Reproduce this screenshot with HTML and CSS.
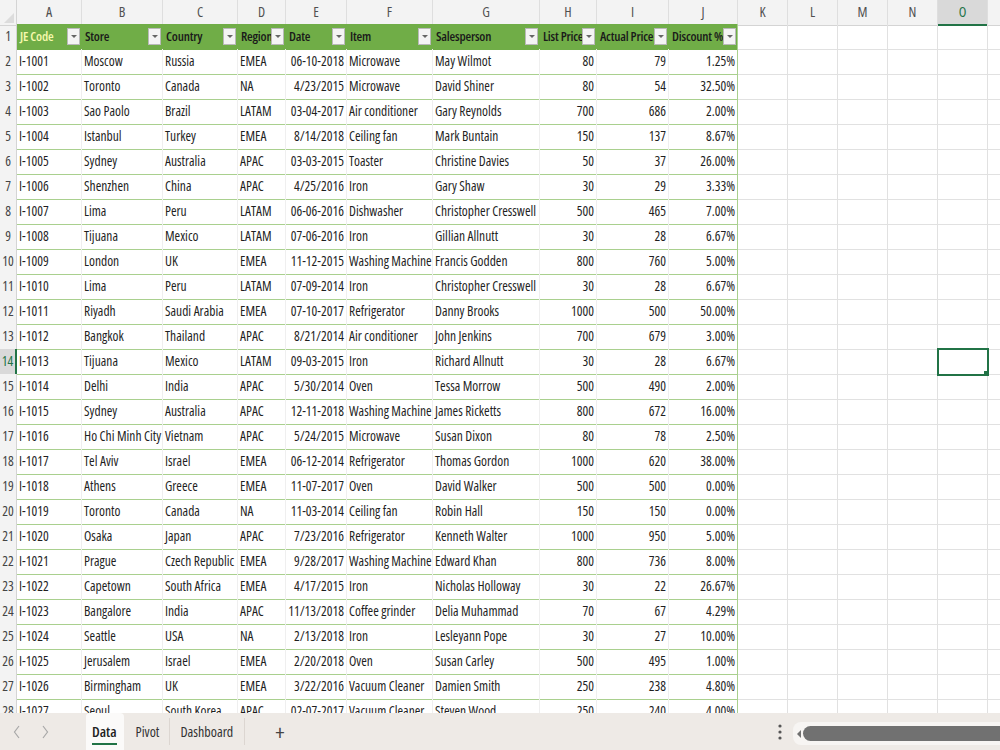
FILE: index.html
```html
<!DOCTYPE html>
<html lang="en">
<head>
    <meta charset="UTF-8">
    <meta name="viewport" content="width=device-width, initial-scale=1.0">
    <title>Sales Data</title>
    <link rel="stylesheet" href="styles.css">
</head>
<body>

    <div class="sheet" id="sheet">
        <div class="row col-heads" id="col-heads">
            <div class="corner"></div>
        </div>
    </div>

    <div class="tabbar">
        <div class="tab-nav">
            <svg class="nav-arrow" width="8" height="14" viewBox="0 0 8 14"><polyline points="6,1 1.5,7 6,13" fill="none" stroke="#a8a8a8" stroke-width="1.2"/></svg>
            <svg class="nav-arrow" width="8" height="14" viewBox="0 0 8 14"><polyline points="2,1 6.5,7 2,13" fill="none" stroke="#a8a8a8" stroke-width="1.2"/></svg>
        </div>
        <div class="tab active">Data</div>
        <div class="tab pivot">Pivot</div>
        <div class="tab dash">Dashboard</div>
        <div class="tab-add">+</div>
        <div class="spacer"></div>
        <svg class="more" width="4" height="16" viewBox="0 0 4 16">
            <circle cx="2" cy="2" r="1.6" fill="#555"/>
            <circle cx="2" cy="8" r="1.6" fill="#555"/>
            <circle cx="2" cy="14" r="1.6" fill="#555"/>
        </svg>
        <div class="hscroll">
            <span class="hscroll-arrow"></span>
            <span class="hscroll-thumb"></span>
        </div>
    </div>

    <script>
        const letters = ['A','B','C','D','E','F','G','H','I','J','K','L','M','N','O','P'];
        const headers = ['JE Code','Store','Country','Region','Date','Item','Salesperson','List Price','Actual Price','Discount %'];
        // columns that hold numbers are right aligned
        const numeric = [4, 7, 8, 9];

        const rows = [
            ['I-1001','Moscow','Russia','EMEA','06-10-2018','Microwave','May Wilmot','80','79','1.25%'],
            ['I-1002','Toronto','Canada','NA','4/23/2015','Microwave','David Shiner','80','54','32.50%'],
            ['I-1003','Sao Paolo','Brazil','LATAM','03-04-2017','Air conditioner','Gary Reynolds','700','686','2.00%'],
            ['I-1004','Istanbul','Turkey','EMEA','8/14/2018','Ceiling fan','Mark Buntain','150','137','8.67%'],
            ['I-1005','Sydney','Australia','APAC','03-03-2015','Toaster','Christine Davies','50','37','26.00%'],
            ['I-1006','Shenzhen','China','APAC','4/25/2016','Iron','Gary Shaw','30','29','3.33%'],
            ['I-1007','Lima','Peru','LATAM','06-06-2016','Dishwasher','Christopher Cresswell','500','465','7.00%'],
            ['I-1008','Tijuana','Mexico','LATAM','07-06-2016','Iron','Gillian Allnutt','30','28','6.67%'],
            ['I-1009','London','UK','EMEA','11-12-2015','Washing Machine','Francis Godden','800','760','5.00%'],
            ['I-1010','Lima','Peru','LATAM','07-09-2014','Iron','Christopher Cresswell','30','28','6.67%'],
            ['I-1011','Riyadh','Saudi Arabia','EMEA','07-10-2017','Refrigerator','Danny Brooks','1000','500','50.00%'],
            ['I-1012','Bangkok','Thailand','APAC','8/21/2014','Air conditioner','John Jenkins','700','679','3.00%'],
            ['I-1013','Tijuana','Mexico','LATAM','09-03-2015','Iron','Richard Allnutt','30','28','6.67%'],
            ['I-1014','Delhi','India','APAC','5/30/2014','Oven','Tessa Morrow','500','490','2.00%'],
            ['I-1015','Sydney','Australia','APAC','12-11-2018','Washing Machine','James Ricketts','800','672','16.00%'],
            ['I-1016','Ho Chi Minh City','Vietnam','APAC','5/24/2015','Microwave','Susan Dixon','80','78','2.50%'],
            ['I-1017','Tel Aviv','Israel','EMEA','06-12-2014','Refrigerator','Thomas Gordon','1000','620','38.00%'],
            ['I-1018','Athens','Greece','EMEA','11-07-2017','Oven','David Walker','500','500','0.00%'],
            ['I-1019','Toronto','Canada','NA','11-03-2014','Ceiling fan','Robin Hall','150','150','0.00%'],
            ['I-1020','Osaka','Japan','APAC','7/23/2016','Refrigerator','Kenneth Walter','1000','950','5.00%'],
            ['I-1021','Prague','Czech Republic','EMEA','9/28/2017','Washing Machine','Edward Khan','800','736','8.00%'],
            ['I-1022','Capetown','South Africa','EMEA','4/17/2015','Iron','Nicholas Holloway','30','22','26.67%'],
            ['I-1023','Bangalore','India','APAC','11/13/2018','Coffee grinder','Delia Muhammad','70','67','4.29%'],
            ['I-1024','Seattle','USA','NA','2/13/2018','Iron','Lesleyann Pope','30','27','10.00%'],
            ['I-1025','Jerusalem','Israel','EMEA','2/20/2018','Oven','Susan Carley','500','495','1.00%'],
            ['I-1026','Birmingham','UK','EMEA','3/22/2016','Vacuum Cleaner','Damien Smith','250','238','4.80%'],
            ['I-1027','Seoul','South Korea','APAC','02-07-2017','Vacuum Cleaner','Steven Wood','250','240','4.00%']
        ];

        const selRow = 14;
        const selCol = 14; // column O

        const sheet = document.getElementById('sheet');
        const colHeads = document.getElementById('col-heads');

        letters.forEach((l, i) => {
            const c = document.createElement('div');
            c.className = 'col-head' + (i === selCol ? ' current' : '');
            c.textContent = l;
            colHeads.appendChild(c);
        });

        function makeRow(num, values, isHeader) {
            const row = document.createElement('div');
            row.className = 'row';

            const rh = document.createElement('div');
            rh.className = 'row-head' + (num === selRow ? ' current' : '');
            rh.textContent = num;
            row.appendChild(rh);

            letters.forEach((l, i) => {
                const cell = document.createElement('div');
                cell.className = 'cell';
                if (i < headers.length) {
                    cell.classList.add(isHeader ? 'th' : 'td');
                    if (i === headers.length - 1) cell.classList.add('last');
                    if (isHeader) {
                        const label = document.createElement('span');
                        label.className = i === 0 ? 'th-label first' : 'th-label';
                        label.textContent = values[i];
                        const btn = document.createElement('span');
                        btn.className = 'filter-btn';
                        cell.appendChild(label);
                        cell.appendChild(btn);
                    } else {
                        if (numeric.includes(i)) cell.classList.add('num');
                        cell.textContent = values[i];
                    }
                }
                if (num === selRow && i === selCol) cell.classList.add('selected');
                row.appendChild(cell);
            });
            sheet.appendChild(row);
        }

        makeRow(1, headers, true);
        rows.forEach((r, i) => makeRow(i + 2, r, false));
    </script>

</body>
</html>
```

FILE: styles.css
```css
:root {
    --grid-line: #e1e1e1;
    --table-line: #a9d08e;
    --table-green: #70ad47;
    --excel-green: #217346;
    --head-bg: #f3f3f3;
    --head-current: #d9d9d9;
    --bar-bg: #eeeae6;
}

body {
    margin: 0;
    width: 1000px;
    height: 750px;
    overflow: hidden;
    background-color: #fff;
    font-family: "Open Sans", "Liberation Sans", sans-serif;
    font-stretch: 75%;
    color: #1f1f1f;
}

.sheet {
    height: 713px;
    overflow: hidden;
}

.row {
    display: grid;
    grid-template-columns: 17px 65px 81px 75px 48px 61px 86px 107px 57px 72px 69px 50px 50px 50px 50px 50px 50px;
    height: 25px;
}

.col-heads {
    height: 24px;
}

.corner {
    position: relative;
    background-color: var(--head-bg);
    border-right: 1px solid #d4d4d4;
    border-bottom: 1px solid #d4d4d4;
}

/* select-all triangle */
.corner::after {
    content: "";
    position: absolute;
    right: 2px;
    bottom: 2px;
    border-left: 10px solid transparent;
    border-bottom: 10px solid #dcdcdc;
}

.col-head {
    box-sizing: border-box;
    background-color: var(--head-bg);
    border-right: 1px solid #dedede;
    border-bottom: 1px solid #d4d4d4;
    text-align: center;
    line-height: 24px;
    font-size: 14px;
    color: #505050;
}

.col-head.current {
    background-color: var(--head-current);
    border-bottom: 2px solid var(--excel-green);
    color: var(--excel-green);
}

.row-head {
    box-sizing: border-box;
    background-color: var(--head-bg);
    border-right: 1px solid #d4d4d4;
    border-bottom: 1px solid #e4e4e4;
    text-align: center;
    line-height: 25px;
    font-size: 13.5px;
    color: #444;
}

.row-head.current {
    background-color: var(--head-current);
    border-right: 2px solid var(--excel-green);
    color: var(--excel-green);
}

.cell {
    box-sizing: border-box;
    border-right: 1px solid var(--grid-line);
    border-bottom: 1px solid var(--grid-line);
    padding: 0 2px;
    line-height: 25px;
    font-size: 13.5px;
    white-space: nowrap;
    overflow: hidden;
}

.td {
    border-right-color: #efefef;
    border-bottom-color: var(--table-line);
}

.td.num {
    text-align: right;
}

.td.last, .th.last {
    border-right-color: var(--table-line);
}

.th {
    display: flex;
    align-items: center;
    padding: 0 1px 0 3px;
    background-color: var(--table-green);
    border-right-color: var(--table-green);
    border-bottom-color: var(--table-green);
    font-size: 13px;
    font-weight: 600;
    letter-spacing: -0.2px;
    color: #1a1a1a;
}

/* long labels run under the filter button */
.th-label {
    flex: 1;
    min-width: 0;
}

.th-label.first {
    color: #f7f9ad;
}

.filter-btn {
    position: relative;
    flex: none;
    box-sizing: border-box;
    width: 13px;
    height: 17px;
    background-color: #f4f4f4;
    border: 1px solid #b9b9b9;
}

.filter-btn::after {
    content: "";
    position: absolute;
    left: 3px;
    top: 6px;
    border-left: 3px solid transparent;
    border-right: 3px solid transparent;
    border-top: 3px solid #666;
}

.cell.selected {
    position: relative;
    outline: 2px solid var(--excel-green);
    outline-offset: -1px;
}

/* fill handle */
.cell.selected::after {
    content: "";
    position: absolute;
    right: -3px;
    bottom: -3px;
    width: 5px;
    height: 5px;
    background-color: var(--excel-green);
    border: 1px solid #fff;
}

/* sheet tabs */
.tabbar {
    display: flex;
    align-items: stretch;
    height: 37px;
    background-color: var(--bar-bg);
    font-size: 14px;
    color: #333;
}

.tab-nav {
    display: flex;
    align-items: center;
    gap: 20px;
    width: 73px;
    padding-left: 13px;
}

.nav-arrow {
    flex: none;
}

.tab {
    position: relative;
    display: flex;
    align-items: center;
    padding: 0 10px;
    border-right: 1px solid #dcd6d1;
    margin: 5px 0;
}

.tab.pivot {
    padding-left: 12px;
}

.tab.dash {
    padding-right: 11px;
}

.tab.active {
    margin: 0;
    padding: 0 7px 0 6px;
    background-color: #fbfaf9;
    border-right: none;
    border-radius: 4px 4px 0 0;
    font-size: 14.5px;
    font-weight: 600;
    color: #222;
}

.tab.active::after {
    content: "";
    position: absolute;
    left: 6px;
    right: 7px;
    bottom: 5px;
    height: 2px;
    background-color: var(--excel-green);
}

.tab-add {
    display: flex;
    align-items: center;
    padding-left: 30px;
    font-size: 22px;
    line-height: 1;
    color: #444;
}

.spacer {
    flex: 1;
}

.more {
    flex: none;
    align-self: center;
    margin-right: 11px;
}

.hscroll {
    display: flex;
    align-items: center;
    gap: 2px;
    width: 203px;
    margin: 9px 0 5px;
    padding-left: 4px;
    background-color: #f7f5f3;
    border-radius: 8px 0 0 8px;
}

.hscroll-arrow {
    border-top: 4px solid transparent;
    border-bottom: 4px solid transparent;
    border-right: 4px solid #707070;
}

.hscroll-thumb {
    flex: 1;
    height: 15px;
    background-color: #717171;
    border-radius: 8px 0 0 8px;
}
```
